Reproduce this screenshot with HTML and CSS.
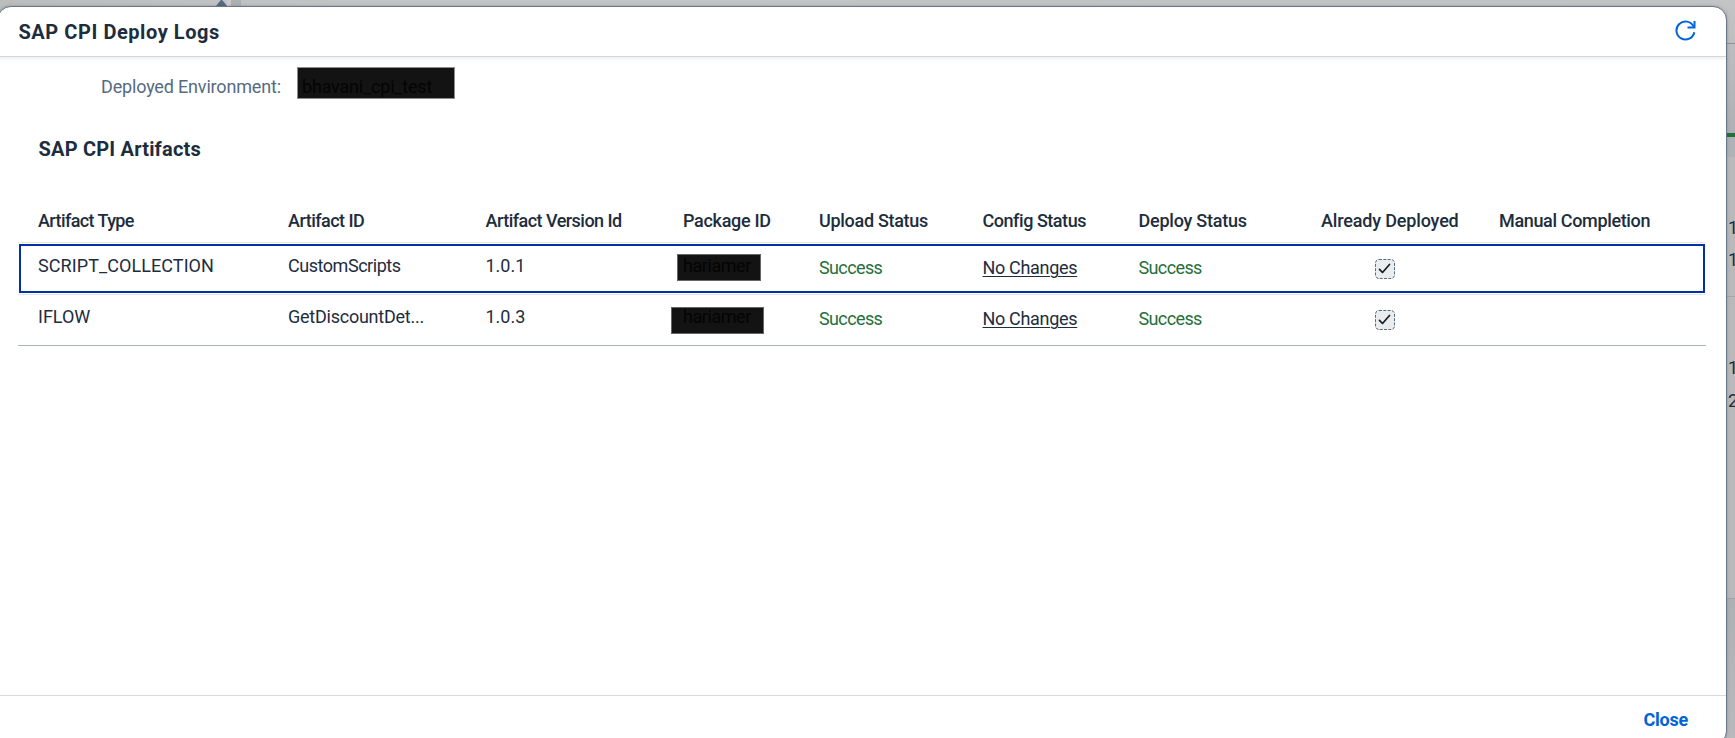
FILE: index.html
```
<!DOCTYPE html>
<html lang="en">
<head>
<meta charset="utf-8">
<title>SAP CPI Deploy Logs</title>
<link rel="stylesheet" href="styles.css">
</head>
<body>
<div class="page">
  <svg class="page-top" width="40" height="7" viewBox="0 0 40 7"><rect x="13" width="4" height="7" fill="#c9cacb"/><rect x="17" width="10" height="7" fill="#acb0b3"/><path d="M2 7V6l4-5 1-1h1l1 1 4 5v1z" fill="#56697d"/></svg>
  <div class="strip">
    <div class="strip-head"></div>
    <div class="strip-mid"></div>
    <div class="strip-green"></div>
    <div class="strip-band"></div>
    <div class="strip-list first"><span>1</span><span>1</span></div>
    <div class="strip-list second"><span>1</span><span>2</span></div>
    <div class="strip-foot"></div>
  </div>
  <section class="dialog">
    <header class="dialog-head">
      <h1>SAP CPI Deploy Logs</h1>
      <svg class="refresh" width="22" height="22" viewBox="0 0 22 22" fill="none" stroke="#0064d9" stroke-width="2"><path d="M19.3 12.2A9 9 0 1 1 18.6 6.6"/><path d="M19.5 1V7.5H12.5"/></svg>
    </header>
    <main class="dialog-body">
      <div class="env"><span class="env-label">Deployed Environment:</span><span class="env-value">bhavani_cpi_test</span></div>
      <h2>SAP CPI Artifacts</h2>
      <div class="table">
        <div class="row thead">
          <span class="t57">Artifact Type</span><span class="t50">Artifact ID</span><span class="t50">Artifact Version Id</span><span class="t30">Package ID</span><span class="t30">Upload Status</span><span class="t43">Config Status</span><span class="t22">Deploy Status</span><span class="t16">Already Deployed</span><span class="t35">Manual Completion</span>
        </div>
        <div class="row focused">
          <span class="w08">SCRIPT_COLLECTION</span><span class="t43">CustomScripts</span><span class="t10">1.0.1</span>
          <span class="pkg pkg-a">hariamer</span>
          <span class="status">Success</span><span class="link"><a>No Changes</a></span><span class="status">Success</span>
          <span class="check"><svg width="20" height="20" viewBox="0 0 20 20" fill="none"><rect x=".5" y=".5" width="19" height="19" rx="3.5" fill="#eaecee" stroke="#556b82" stroke-dasharray="3 1.3"/><path d="M4.5 10.3l3 3.2 7-8" stroke="#131e29" stroke-width="1.7" stroke-linecap="round" stroke-linejoin="round"/></svg></span><span></span>
        </div>
        <div class="row last">
          <span class="t10">IFLOW</span><span class="t22">GetDiscountDet...</span><span class="t10">1.0.3</span>
          <span class="pkg pkg-b">hariamer</span>
          <span class="status">Success</span><span class="link"><a>No Changes</a></span><span class="status">Success</span>
          <span class="check"><svg width="20" height="20" viewBox="0 0 20 20" fill="none"><rect x=".5" y=".5" width="19" height="19" rx="3.5" fill="#eaecee" stroke="#556b82" stroke-dasharray="3 1.3"/><path d="M4.5 10.3l3 3.2 7-8" stroke="#131e29" stroke-width="1.7" stroke-linecap="round" stroke-linejoin="round"/></svg></span><span></span>
        </div>
      </div>
    </main>
    <footer class="dialog-foot"><span>Close</span></footer>
  </section>
</div>
</body>
</html>
```

FILE: styles.css
```
*, *::before, *::after { box-sizing: border-box; }
body { margin: 0; overflow: hidden; font: 18px/22px Roboto, "Liberation Sans", sans-serif; color: #1d2d3e; }
.page { position: relative; width: 1735px; height: 738px; overflow: hidden; background: linear-gradient(90deg, #bbbcbd, #c3c4c5 20%, #c2c3c4); }
.page-top { position: absolute; left: 214px; top: 0; }

.strip { display: flex; flex-direction: column; width: 15px; height: 738px; margin-left: auto; }
.strip-head { height: 44px; background: linear-gradient(#c3c4c5, #bdbec0); border-bottom: 1px solid #8a919a; }
.strip-mid { height: 89px; background: linear-gradient(#bcbdbf, #aeb0b5); }
.strip-green { height: 4px; background: #24703b; }
.strip-band { height: 20px; background: #afb3b7; }
.strip-list { display: flex; flex-direction: column; padding-left: 8px; background: #b9b9bb; }
.strip-list.first { height: 140px; padding-top: 60px; gap: 10px; border-bottom: 1px solid #a5a6a8; }
.strip-list.second { height: 302px; padding-top: 60px; gap: 11px; border-bottom: 1px solid #a0a3a6; }
.strip-foot { flex: 1; background: linear-gradient(#adb1b4, #b9b9bc); }

.dialog { position: absolute; left: -3px; top: 6px; width: 1730px; height: 739px; display: flex; flex-direction: column; background: #fff; border: 1px solid #68788a; border-radius: 14px; box-shadow: 0 0 3px rgba(60, 70, 80, .35); }
.dialog-head { display: flex; justify-content: space-between; height: 50px; flex: none; padding: 13px 29px 0 20.5px; border-bottom: 1px solid #d5d7d9; box-shadow: 0 2px 3px rgba(34, 53, 72, .08); }
h1, h2 { margin: 0; font-size: 20px; line-height: 24px; font-weight: 700; }
h1 { letter-spacing: .56px; }
h2 { margin: 38px 0 0 20.5px; letter-spacing: .2px; }
.dialog-body { flex: 1; padding: 10px 20px 0; }

.env { display: flex; height: 32px; }
.env-label { width: 215px; margin-left: 83px; padding-top: 9px; color: #556b82; letter-spacing: -.17px; }
.env-value { width: 158px; height: 32px; margin-left: -19px; padding: 8px 0 0 4px; background: #131313; border: 1px solid #8d8d8d; color: #040404; letter-spacing: -.19px; }

.table { position: relative; margin-top: 37px; }
.row { position: relative; display: grid; grid-template-columns: 250px 197.5px 197.5px 136px 163.5px 156px 182.5px 178px auto; height: 51px; padding: 11px 0 0 20px; border-bottom: 1px solid #e5e5e5; white-space: nowrap; }
.thead { height: 45px; padding-top: 12px; font-weight: 500; }
.focused { height: 52px; padding-top: 12px; }
.focused::after { content: ""; position: absolute; left: 1px; right: 1px; top: 1px; bottom: 1px; border: 2px solid #0032a5; }
.last { border-bottom-color: #a8b2bd; }
.status { padding-top: 2px; color: #256f3a; letter-spacing: -.62px; }
.link { padding-top: 2px; letter-spacing: -.32px; }
.link a { text-decoration: underline; text-decoration-thickness: 1px; text-underline-offset: 2px; }
.check { padding: 4px 0 0 54px; line-height: 0; }
.pkg { position: relative; z-index: 0; color: #040404; letter-spacing: -.45px; }
.pkg::before { content: ""; position: absolute; z-index: -1; background: #131313; border: 1px solid #666; }
.pkg-a::before { left: -6px; top: -1px; width: 84px; height: 27px; }
.pkg-b::before { left: -12px; top: 1px; width: 93px; height: 27px; }
.w08 { letter-spacing: .08px; }
.t10 { letter-spacing: -.02px; }
.t16 { letter-spacing: -.16px; }
.t22 { letter-spacing: -.24px; }
.t30 { letter-spacing: -.3px; }
.t35 { letter-spacing: -.35px; }
.t43 { letter-spacing: -.46px; }
.t50 { letter-spacing: -.53px; }
.t57 { letter-spacing: -.6px; }

.dialog-foot { flex: none; height: 49px; padding: 13px 38px 0 0; border-top: 1px solid #d9d9d9; text-align: right; font-weight: 700; letter-spacing: -.25px; color: #0064d9; }
```
